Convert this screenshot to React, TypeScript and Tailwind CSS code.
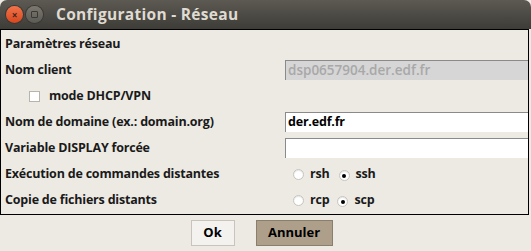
import React from "react";

const font = { fontFamily: '"Open Sans", "DejaVu Sans", sans-serif' };

function Radio({ checked }: { checked?: boolean }) {
  return (
    <span className="inline-flex h-[11px] w-[11px] items-center justify-center rounded-full border border-[#c8c4bc] bg-white shadow-[inset_0_1px_1px_rgba(0,0,0,0.1)]">
      {checked && <span className="h-[4px] w-[4px] rounded-full bg-black" />}
    </span>
  );
}

function Row({ label, children }: { label: string; children?: React.ReactNode }) {
  return (
    <div className="flex h-[26px] items-center">
      <div className="w-[284px] pl-[4px] text-[12.5px] font-bold tracking-[-0.2px] text-[#1a1a1a]">{label}</div>
      <div className="flex flex-1 items-center">{children}</div>
    </div>
  );
}

export default function App() {
  return (
    <div className="h-[251px] w-[531px] bg-[#edeae4]" style={font}>
      <div className="flex h-[29px] items-center rounded-t-[7px] bg-gradient-to-b from-[#5d5a53] to-[#3d3c37] pl-[6px]">
        <span className="flex h-[17px] w-[17px] items-center justify-center rounded-full bg-gradient-to-b from-[#f2734a] to-[#d8461b] text-[10px] font-bold leading-none text-[#3a2a22] shadow-[0_0_0_1px_#3a3833]">
          ×
        </span>
        <span className="ml-[3px] flex h-[17px] w-[17px] items-center justify-center rounded-full bg-gradient-to-b from-[#7a7870] to-[#5c5a54] shadow-[0_0_0_1px_#3a3833]">
          <span className="h-[7px] w-[7px] rounded-[1px] border border-[#3a3833]" />
        </span>
        <span className="ml-[13px] text-[15.5px] font-bold tracking-[0.3px] text-[#dfdbd2]">Configuration - Réseau</span>
      </div>
      <div className="mr-[2px] h-[186px] border border-black pt-[1px]">
        <Row label="Paramètres réseau" />
        <Row label="Nom client">
          <div className="flex h-[20px] flex-1 items-center border-l border-t border-[#8a8a8a] bg-[#d6d6d6] pl-[2px] text-[13.5px] font-semibold text-[#a8a8a8]">
            dsp0657904.der.edf.fr
          </div>
        </Row>
        <div className="flex h-[26px] items-center pl-[28px]">
          <span className="h-[11px] w-[11px] border border-[#b8b4ac] bg-white" />
          <span className="ml-[9px] text-[12.5px] font-bold tracking-[-0.2px] text-[#1a1a1a]">mode DHCP/VPN</span>
        </div>
        <Row label="Nom de domaine (ex.: domain.org)">
          <div className="flex h-[20px] flex-1 items-center border-l border-t border-[#8a8a8a] bg-white pl-[2px] text-[12.5px] font-bold tracking-[-0.2px] text-black">
            der.edf.fr
          </div>
        </Row>
        <Row label="Variable DISPLAY forcée">
          <div className="h-[20px] flex-1 border-l border-t border-[#8a8a8a] bg-white" />
        </Row>
        <Row label="Exécution de commandes distantes">
          <div className="ml-[8px] flex items-center text-[12.5px] font-bold tracking-[-0.2px] text-[#1a1a1a]">
            <Radio />
            <span className="ml-[6px]">rsh</span>
            <span className="ml-[9px]"><Radio checked /></span>
            <span className="ml-[6px]">ssh</span>
          </div>
        </Row>
        <Row label="Copie de fichiers distants">
          <div className="ml-[8px] flex items-center text-[12.5px] font-bold tracking-[-0.2px] text-[#1a1a1a]">
            <Radio />
            <span className="ml-[6px]">rcp</span>
            <span className="ml-[8px]"><Radio checked /></span>
            <span className="ml-[6px]">scp</span>
          </div>
        </Row>
      </div>
      <div className="flex h-[36px] items-center justify-center gap-[21px] pr-[8px]">
        <button className="h-[26px] w-[44px] border border-[#c8c4bc] bg-[#f4f2ee] text-[13px] font-bold text-black">
          Ok
        </button>
        <button className="h-[26px] w-[77px] border border-[#8a7e6e] bg-[#ae9f8b] text-[13px] font-bold text-black">
          Annuler
        </button>
      </div>
    </div>
  );
}
